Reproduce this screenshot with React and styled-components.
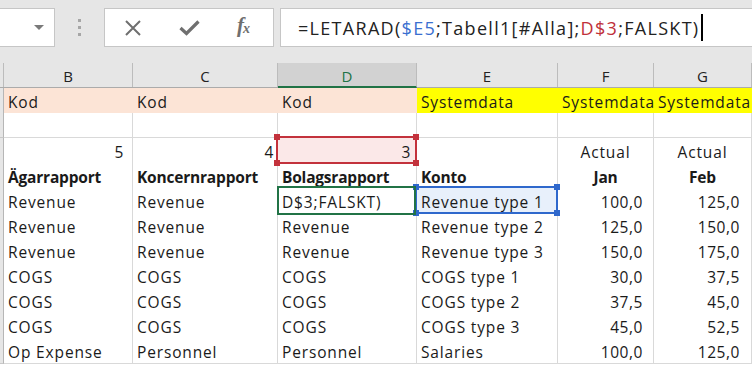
import React from 'react';
import styled, { createGlobalStyle, css } from 'styled-components';

const GlobalStyle = createGlobalStyle`
  html, body {
    margin: 0;
    padding: 0;
    background: #ffffff;
    overflow: hidden;
  }
  * { box-sizing: border-box; }
`;

const COLS = '4px 129px 145px 139px 141px 96px 98px';

const Page = styled.div`
  width: 752px;
  height: 366px;
  overflow: hidden;
  font-family: "Open Sans", "Liberation Sans", sans-serif;
  color: #1a1a1a;
`;

const Toolbar = styled.div`
  height: 62px;
  background: #e6e6e6;
  display: flex;
  align-items: flex-start;
  padding-top: 8px;
`;

const NameBox = styled.div`
  width: 55px;
  height: 39px;
  background: #ffffff;
  border: 1px solid #c6c6c6;
  border-left: none;
  display: flex;
  align-items: center;
  justify-content: flex-end;
  padding-right: 10px;
`;

const Caret = styled.span`
  width: 0;
  height: 0;
  border-left: 5px solid transparent;
  border-right: 5px solid transparent;
  border-top: 5px solid #7a7a7a;
`;

const Grip = styled.div`
  width: 49px;
  height: 39px;
  display: flex;
  flex-direction: column;
  align-items: center;
  justify-content: center;
  gap: 4px;
`;

const Dot = styled.span`
  width: 3px;
  height: 3px;
  background: #a6a6a6;
`;

const FxButtons = styled.div`
  width: 170px;
  height: 39px;
  background: #ffffff;
  border: 1px solid #c6c6c6;
  display: flex;
  align-items: center;
  gap: 37px;
  padding-left: 19px;
`;

const FxLabel = styled.span`
  font-family: "Liberation Serif", serif;
  font-style: italic;
  font-weight: 700;
  font-size: 21px;
  color: #6f6f6f;
  letter-spacing: -1px;
  margin-top: -4px;

  sub {
    font-size: 14px;
    vertical-align: -1px;
  }
`;

const FormulaInput = styled.div`
  flex: 1;
  margin-left: 6px;
  height: 39px;
  background: #ffffff;
  border: 1px solid #c6c6c6;
  border-right: none;
  display: flex;
  align-items: center;
  padding-left: 17px;
  font-family: "Open Sans", "Liberation Sans", sans-serif;
  font-size: 18px;
  letter-spacing: 1.3px;
  color: #222;
  white-space: nowrap;
`;

const Ref = styled.span`
  color: ${(p) => p.$color};
`;

const CursorBar = styled.span`
  display: inline-block;
  width: 2px;
  height: 27px;
  background: #000;
  margin-left: 2px;
`;

const HeaderRow = styled.div`
  display: grid;
  grid-template-columns: ${COLS};
  height: 26px;
  background: #e6e6e6;
  border-bottom: 1px solid #ababab;
`;

const ColHeader = styled.div`
  display: flex;
  align-items: center;
  justify-content: center;
  font-size: 15px;
  color: #222;
  border-right: 1px solid #bcbcbc;
  margin-top: 1px;
  padding-top: 2px;

  ${(p) =>
    p.$active &&
    css`
      background: #d2d2d2;
      color: #217346;
      border-bottom: 2px solid #217346;
      margin-bottom: -1px;
    `}
`;

const Row = styled.div`
  display: grid;
  grid-template-columns: ${COLS};
  height: 25px;
`;

const RowHead = styled.div`
  background: #e6e6e6;
  border-right: 1px solid #b6b6b6;
  border-bottom: 1px solid #c8c8c8;
`;

const Cell = styled.div`
  position: relative;
  display: flex;
  align-items: center;
  justify-content: ${(p) =>
    p.$align === 'right' ? 'flex-end' : p.$align === 'center' ? 'center' : 'flex-start'};
  padding: 3px ${(p) => p.$pr ?? 4}px 0 4px;
  font-size: 15.5px;
  letter-spacing: ${(p) => (p.$bold ? '-0.2px' : p.$num ? '0.55px' : '0.85px')};
  font-weight: ${(p) => (p.$bold ? 700 : 400)};
  background: ${(p) => p.$fill || '#ffffff'};
  border-right: 1px solid ${(p) => (p.$fill ? p.$fill : '#d9d9d9')};
  border-bottom: 1px solid #d9d9d9;
  white-space: nowrap;
  overflow: visible;
`;

const CellText = styled.span`
  position: relative;
  z-index: 2;
`;

const RangeBox = styled.div`
  position: absolute;
  z-index: 1;
  top: -2px;
  left: -2px;
  right: -1px;
  bottom: -1px;
  border: 2px solid ${(p) => p.$color};
  background: ${(p) => p.$tint || 'transparent'};
  pointer-events: none;
`;

const Handle = styled.span`
  position: absolute;
  width: 6px;
  height: 6px;
  background: ${(p) => p.$color};
  ${(p) => (p.$v === 'top' ? 'top: -4px;' : 'bottom: -4px;')}
  ${(p) => (p.$h === 'left' ? 'left: -4px;' : 'right: -4px;')}
`;

const ActiveBox = styled.div`
  position: absolute;
  z-index: 3;
  top: -2px;
  left: -1px;
  right: 0;
  bottom: -2px;
  border: 2px solid #217346;
  pointer-events: none;
`;

const Range = ({ color, tint }) => (
  <RangeBox $color={color} $tint={tint}>
    <Handle $color={color} $v="top" $h="left" />
    <Handle $color={color} $v="top" $h="right" />
    <Handle $color={color} $v="bottom" $h="left" />
    <Handle $color={color} $v="bottom" $h="right" />
  </RangeBox>
);

const CloseIcon = () => (
  <svg width="18" height="16" viewBox="0 0 18 16">
    <path d="M2 1 L16 15 M16 1 L2 15" stroke="#6f6f6f" strokeWidth="2" fill="none" />
  </svg>
);

const CheckIcon = () => (
  <svg width="21" height="17" viewBox="0 0 21 17">
    <path d="M1.5 9 L7.5 14.5 L19.5 2.5" stroke="#6f6f6f" strokeWidth="3.2" fill="none" />
  </svg>
);

const PEACH = '#fce4d6';
const YELLOW = '#ffff00';

const rows = [
  [
    { t: 'Kod', fill: PEACH },
    { t: 'Kod', fill: PEACH },
    { t: 'Kod', fill: PEACH },
    { t: 'Systemdata', fill: YELLOW },
    { t: 'Systemdata', fill: YELLOW },
    { t: 'Systemdata', fill: YELLOW },
  ],
  [{}, {}, {}, {}, {}, {}],
  [
    { t: '5', align: 'right', pr: 8, num: true },
    { t: '4', align: 'right', pr: 3, num: true },
    { t: '3', align: 'right', pr: 5, num: true, range: 'red' },
    {},
    { t: 'Actual', align: 'center' },
    { t: 'Actual', align: 'center' },
  ],
  [
    { t: 'Ägarrapport', bold: true },
    { t: 'Koncernrapport', bold: true },
    { t: 'Bolagsrapport', bold: true },
    { t: 'Konto', bold: true },
    { t: 'Jan', bold: true, align: 'center' },
    { t: 'Feb', bold: true, align: 'center' },
  ],
  [
    { t: 'Revenue' },
    { t: 'Revenue' },
    { t: 'D$3;FALSKT)', active: true },
    { t: 'Revenue type 1', range: 'blue' },
    { t: '100,0', align: 'right', pr: 10, num: true },
    { t: '125,0', align: 'right', pr: 11, num: true },
  ],
  ['Revenue', 'Revenue', 'Revenue', 'Revenue type 2', '125,0', '150,0'],
  ['Revenue', 'Revenue', 'Revenue', 'Revenue type 3', '150,0', '175,0'],
  ['COGS', 'COGS', 'COGS', 'COGS type 1', '30,0', '37,5'],
  ['COGS', 'COGS', 'COGS', 'COGS type 2', '37,5', '45,0'],
  ['COGS', 'COGS', 'COGS', 'COGS type 3', '45,0', '52,5'],
  ['Op Expense', 'Personnel', 'Personnel', 'Salaries', '100,0', '125,0'],
].map((r) =>
  typeof r[0] === 'string'
    ? r.map((t, i) =>
        i >= 4 ? { t, align: 'right', pr: i === 4 ? 10 : 11, num: true } : { t }
      )
    : r
);

const COL_LETTERS = ['B', 'C', 'D', 'E', 'F', 'G'];

export default function App() {
  return (
    <Page>
      <GlobalStyle />
      <Toolbar>
        <NameBox>
          <Caret />
        </NameBox>
        <Grip>
          <Dot />
          <Dot />
          <Dot />
        </Grip>
        <FxButtons>
          <CloseIcon />
          <CheckIcon />
          <FxLabel>
            f<sub>x</sub>
          </FxLabel>
        </FxButtons>
        <FormulaInput>
          =LETARAD(<Ref $color="#3a6fd0">$E5</Ref>;Tabell1[#Alla];
          <Ref $color="#c0303a">D$3</Ref>;FALSKT)
          <CursorBar />
        </FormulaInput>
      </Toolbar>

      <HeaderRow>
        <ColHeader />
        {COL_LETTERS.map((l) => (
          <ColHeader key={l} $active={l === 'D'}>
            {l}
          </ColHeader>
        ))}
      </HeaderRow>

      {rows.map((r, ri) => (
        <Row key={ri}>
          <RowHead />
          {r.map((c, ci) => (
            <Cell
              key={ci}
              $fill={c.fill}
              $align={c.align}
              $bold={c.bold}
              $num={c.num}
              $pr={c.pr}
            >
              {c.range === 'red' && <Range color="#c3323c" tint="#fbe8e8" />}
              {c.range === 'blue' && <Range color="#2f68cc" tint="#e8f0fb" />}
              {c.active && <ActiveBox />}
              <CellText>{c.t}</CellText>
            </Cell>
          ))}
        </Row>
      ))}
    </Page>
  );
}
